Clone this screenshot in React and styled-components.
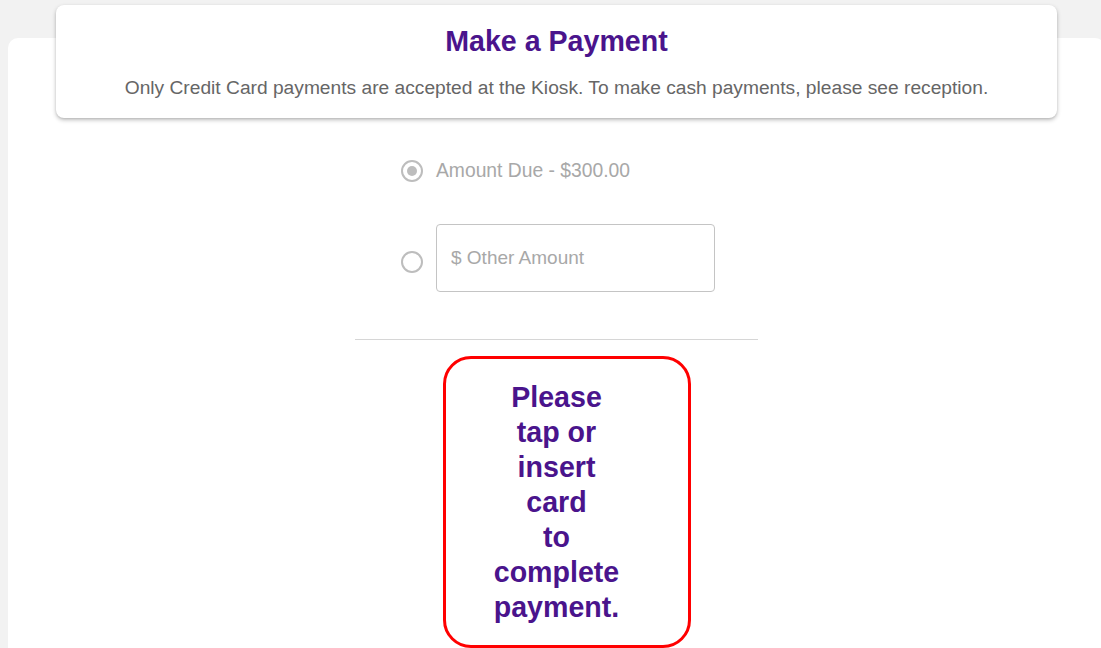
import React from 'react';
import styled, { createGlobalStyle } from 'styled-components';

const GlobalStyle = createGlobalStyle`
  html, body {
    margin: 0;
    padding: 0;
    background: #f2f2f2;
    overflow: hidden;
  }
  body {
    font-family: "Liberation Sans", Arial, sans-serif;
  }
`;

const COLORS = {
  purple: '#4a148c',
  text: '#666666',
  disabled: '#a8a8a8',
  radio: '#bdbdbd',
  border: '#c4c4c4',
  divider: '#d6d6d6',
  red: '#ff0000',
};

const CARD_LINES = ['Please', 'tap or', 'insert', 'card', 'to', 'complete', 'payment.'];

const App = () => {
  return (
    <>
      <GlobalStyle />
      <Viewport>
        <Panel>
          <HeaderCard>
            <Title>Make a Payment</Title>
            <Subtitle>
              Only Credit Card payments are accepted at the Kiosk. To make cash payments, please
              see reception.
            </Subtitle>
          </HeaderCard>

          <RadioGroup>
            <OptionRow>
              <Radio checked disabled />
              <OptionLabel>Amount Due - $300.00</OptionLabel>
            </OptionRow>
            <OptionRow>
              <Radio offset />
              <AmountInput placeholder="$ Other Amount" />
            </OptionRow>
          </RadioGroup>

          <Divider />

          <CardPrompt>
            <PromptText>
              {CARD_LINES.map((line) => (
                <span key={line}>{line}</span>
              ))}
            </PromptText>
          </CardPrompt>
        </Panel>
      </Viewport>
    </>
  );
};

const Radio = ({ checked, offset }) => (
  <RadioButton $offset={offset}>
    <svg width="24" height="24" viewBox="0 0 24 24">
      <circle cx="12" cy="12" r="10" fill="none" stroke={COLORS.radio} strokeWidth="2" />
      {checked && <circle cx="12" cy="12" r="5" fill={COLORS.radio} />}
    </svg>
  </RadioButton>
);

const Viewport = styled.div`
  width: 1105px;
  height: 648px;
  padding: 38px 0 0 8px;
  box-sizing: border-box;
`;

const Panel = styled.main`
  background: #ffffff;
  border-radius: 10px 10px 0 0;
  height: 100%;
  display: flex;
  flex-direction: column;
  align-items: center;
`;

const HeaderCard = styled.section`
  align-self: stretch;
  margin: -33px 48px 0 48px;
  padding: 20px 16px 18px;
  background: #ffffff;
  border-radius: 8px;
  box-shadow: 0 2px 4px rgba(0, 0, 0, 0.25), 0 1px 2px rgba(0, 0, 0, 0.08);
  text-align: center;
`;

const Title = styled.h1`
  margin: 0;
  font-size: 28.6px;
  line-height: 32px;
  font-weight: 700;
  color: ${COLORS.purple};
`;

const Subtitle = styled.p`
  margin: 19px 0 0;
  font-size: 19.2px;
  line-height: 24px;
  color: ${COLORS.text};
`;

const RadioGroup = styled.div`
  width: 331px;
  margin-top: 32px;
  display: flex;
  flex-direction: column;
  gap: 32px;
`;

const OptionRow = styled.label`
  display: flex;
  align-items: center;
  min-height: 42px;
`;

const RadioButton = styled.span`
  display: flex;
  padding: 9px;
  margin-top: ${(p) => (p.$offset ? '8px' : '0')};
`;

const OptionLabel = styled.span`
  margin-left: 3px;
  font-size: 19.3px;
  color: ${COLORS.disabled};
`;

const AmountInput = styled.input`
  margin-left: 3px;
  width: 279px;
  height: 68px;
  box-sizing: border-box;
  padding: 0 14px;
  border: 1px solid ${COLORS.border};
  border-radius: 4px;
  font-family: "Liberation Sans", Arial, sans-serif;
  font-size: 19px;
  color: #333;
  outline: none;

  &::placeholder {
    color: ${COLORS.disabled};
  }
`;

const Divider = styled.hr`
  width: 403px;
  margin: 47px 0 0;
  border: 0;
  border-top: 1px solid ${COLORS.divider};
`;

const CardPrompt = styled.div`
  margin: 16px 0 0 20px;
  width: 248px;
  box-sizing: border-box;
  padding: 21px 20px 20px 0;
  border: 3px solid ${COLORS.red};
  border-radius: 28px;
`;

const PromptText = styled.p`
  margin: 0;
  display: flex;
  flex-direction: column;
  align-items: center;
  font-size: 28.6px;
  line-height: 35px;
  font-weight: 700;
  color: ${COLORS.purple};
`;

export default App;
